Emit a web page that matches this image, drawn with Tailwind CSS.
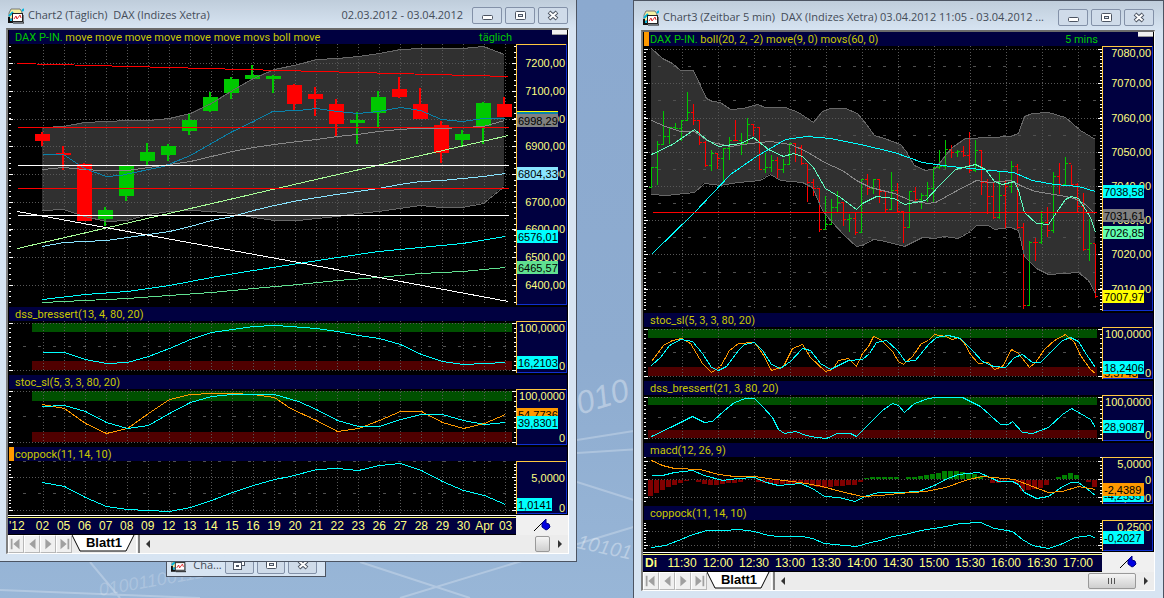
<!DOCTYPE html>
<html lang="de">
<head>
  <meta charset="utf-8">
  <meta name="viewport" content="width=device-width, initial-scale=1">
  <title>DAX Charts</title>
  <script src="https://cdn.jsdelivr.net/npm/@tailwindcss/browser@4"></script>
</head>
<body class="bg-[#93b1d3] font-['Liberation_Sans',Arial,sans-serif]">
<svg class="hidden">
  <symbol id="app" viewBox="0 0 16 16">
    <path d="M3 1h9l2 3-2 7H1V5z" fill="#f4f0a0" stroke="#777" />
    <path d="M1 8l4-4M0 13l5-2M14 3l2-2" stroke="#00b4dc" stroke-width="2" />
    <path d="M1 9v5h4" fill="none" stroke="#111" stroke-width="2" />
    <rect x="4.500" y="5.500" width="10" height="8" fill="#fff" stroke="#222" />
    <path d="M6 11l2-3 1 3 3-4 1 3" fill="none" stroke="#e03030" />
    <path d="M5 15h11V7" fill="none" stroke="#111" />
  </symbol>
  <symbol id="min" viewBox="0 0 14 12"><rect x="2.500" y="5.500" width="10" height="4" rx="1" fill="#fff" stroke="#4c5462" /></symbol>
  <symbol id="max" viewBox="0 0 14 12"><rect x="2.500" y="1.500" width="10" height="8" rx="1" fill="#fff" stroke="#4c5462" /><rect x="5.500" y="4.500" width="4" height="2" fill="#dfe6ee" stroke="#4c5462" /></symbol>
  <symbol id="restore" viewBox="0 0 14 12"><rect x="5.500" y="0.500" width="7" height="6" fill="#fff" stroke="#4c5462" /><rect x="1.500" y="3.500" width="8" height="7" fill="#fff" stroke="#4c5462" /><rect x="4.500" y="6.500" width="2" height="1" fill="#fff" stroke="#4c5462" /></symbol>
  <symbol id="close" viewBox="0 0 14 12"><path d="M3 2l8 7M11 2l-8 7" stroke="#4c5462" stroke-width="4" /><path d="M3.500 2.500l7 6M10.500 2.500l-7 6" stroke="#fff" stroke-width="2" /></symbol>
  <symbol id="first" viewBox="0 0 16 16"><path d="M3 2v12" stroke="#a0a0a0" stroke-width="2" /><path d="M12 2v12L5 8z" fill="#a0a0a0" /></symbol>
  <symbol id="prev" viewBox="0 0 16 16"><path d="M12 2v12L5 8z" fill="#a0a0a0" /></symbol>
  <symbol id="next" viewBox="0 0 16 16"><path d="M5 2v12l7-6z" fill="#a0a0a0" /></symbol>
  <symbol id="last" viewBox="0 0 16 16"><path d="M4 2v12l7-6z" fill="#a0a0a0" /><path d="M13 2v12" stroke="#a0a0a0" stroke-width="2" /></symbol>
  <symbol id="flag" viewBox="0 0 18 14"><path d="M1 13L13 1" stroke="#000" /><path d="M9 5l4-4v4l3 1 1 3-2 2-2 1-4-3z" fill="#0000e0" stroke="#000080" /></symbol>
</svg>

<main class="relative flex min-h-screen items-start gap-14 overflow-hidden">
  <!-- desktop wallpaper -->
  <svg class="absolute inset-0 h-full w-full" viewBox="0 0 1164 598" preserveAspectRatio="xMidYMid slice" aria-hidden="true">
    <defs>
      <linearGradient id="sky" x1="0" y1="0" x2="0" y2="1">
        <stop offset="0" stop-color="#8ba9cf" /><stop offset="0.6" stop-color="#8eacd0" /><stop offset="1" stop-color="#98b6d7" />
      </linearGradient>
    </defs>
    <rect width="1164" height="598" fill="url(#sky)" />
    <g stroke="#fff" stroke-opacity="0.25" stroke-width="2">
      <path d="M577 440L640 430M577 453L640 449M577 482L640 502M360 562L470 598M400 598L640 525M90 562L120 598M0 590L200 598" fill="none" />
    </g>
    <g fill="#fff" fill-opacity="0.35" font-style="italic">
      <text x="563" y="420" font-size="32" transform="rotate(-17 563 420)">0010</text>
      <text x="576" y="548" font-size="20" transform="rotate(12 576 548)">10101</text>
      <text x="100" y="596" font-size="18" fill-opacity="0.2" transform="rotate(-10 100 596)">01001100111</text>
    </g>
  </svg>

  <!-- minimized window, half hidden below the first chart -->
  <section class="absolute top-[549px] left-[166px] flex h-7 w-40 items-center gap-[3px] border border-[#4c5462] bg-[#d7e4f2] px-1 pt-1">
    <svg class="size-4"><use href="#app" /></svg>
    <h2 class="flex-1 pl-1 font-['Open_Sans',sans-serif] text-[11px] text-[#444c58]">Cha...</h2>
    <button aria-label="Wiederherstellen" class="flex h-[17px] w-[30px] items-center justify-center rounded-xs border border-[#8391a8] bg-[#cfdbe9]"><svg class="h-3 w-3.5"><use href="#restore" /></svg></button>
    <button aria-label="Maximieren" class="flex h-[17px] w-[30px] items-center justify-center rounded-xs border border-[#8391a8] bg-[#cfdbe9]"><svg class="h-3 w-3.5"><use href="#max" /></svg></button>
    <button aria-label="Schließen" class="mr-1 flex h-[17px] w-[30px] items-center justify-center rounded-xs border border-[#8391a8] bg-[#cfdbe9]"><svg class="h-3 w-3.5"><use href="#close" /></svg></button>
  </section>

  <!-- Chart2 -->
  <section class="relative min-w-0 flex-[563] border-r border-b border-[#4c5462] bg-[#d7e4f2] bg-linear-to-b from-[#bfcddb] to-[#d7e4f2] to-5% pr-[7px] pb-[7px] pl-1.5">
    <header class="flex h-7 items-center gap-[3px] pt-[3px] font-['Open_Sans',sans-serif] text-[11px] text-[#444c58]">
      <svg class="ml-[2px] size-4"><use href="#app" /></svg>
      <h1 class="ml-px flex-1 truncate whitespace-pre">Chart2 (Täglich)  DAX (Indizes Xetra)</h1>
      <span class="mr-1.5 whitespace-nowrap">02.03.2012 - 03.04.2012</span>
      <button aria-label="Minimieren" class="flex h-[17px] w-[30px] items-center justify-center rounded-xs border border-[#8391a8] bg-[#cfdbe9]"><svg class="h-3 w-3.5"><use href="#min" /></svg></button>
      <button aria-label="Maximieren" class="flex h-[17px] w-[30px] items-center justify-center rounded-xs border border-[#8391a8] bg-[#cfdbe9]"><svg class="h-3 w-3.5"><use href="#max" /></svg></button>
      <button aria-label="Schließen" class="mr-px flex h-[17px] w-[30px] items-center justify-center rounded-xs border border-[#8391a8] bg-[#cfdbe9]"><svg class="h-3 w-3.5"><use href="#close" /></svg></button>
    </header>
    <div class="border-t-2 border-r border-b border-l-2 border-t-[#6a6a6a] border-r-white border-b-white border-l-[#808080] bg-black text-[11px] leading-4 text-[#c8c800]">
      <div class="mx-px flex h-3.5 bg-[#000040] pl-1.5 font-['Roboto',sans-serif]">
        <p class="flex-1 whitespace-nowrap"><span class="text-[#00c800]">DAX P-IN.</span> move move move move move move movs boll move</p>
        <span class="mr-10 text-[#00c800]">täglich</span>
        <i class="h-[5px] w-[15px] self-start border-b border-[#999] bg-[#f0f0f0]"></i>
      </div>
      <div class="flex h-[263px]" data-panel="a1"></div>
      <h2 class="mx-px h-3.5 bg-[#000040] pl-1.5 font-['Roboto',sans-serif]">dss_bressert(13, 4, 80, 20)</h2>
      <div class="flex h-[54px]" data-panel="a2"></div>
      <h2 class="mx-px h-3.5 bg-[#000040] pl-1.5 font-['Roboto',sans-serif]">stoc_sl(5, 3, 3, 80, 20)</h2>
      <div class="flex h-[58px]" data-panel="a3"></div>
      <h2 class="mx-px h-3.5 border-l-[5px] border-[#ff9900] bg-[#000040] pl-px font-['Roboto',sans-serif]">coppock(11, 14, 10)</h2>
      <div class="flex h-[54px]" data-panel="a4"></div>
      <div class="flex h-5 bg-[#f0f0f0]">
        <div class="flex-1 border-t border-b border-t-white border-b-black bg-black pt-px">
          <ol class="flex h-[17px] border-t border-[#ffff80] bg-[#000040] text-center text-xs leading-4 text-[#ffff80]" data-ticks="'12 02 05 06 07 08 09 12 13 14 15 16 19 20 21 22 23 26 27 28 29 30 Apr 03"></ol>
        </div>
        <div class="flex w-[52px] items-center justify-center"><svg class="h-3.5 w-[18px]"><use href="#flag" /></svg></div>
      </div>
      <nav class="flex h-[18px] bg-[#ececec]">
        <button aria-label="Erstes Blatt" class="w-4 border border-[#b8b8b8] border-t-white border-l-white bg-[#f0f0f0]"><svg class="h-4 w-full"><use href="#first" /></svg></button>
        <button aria-label="Vorheriges Blatt" class="w-4 border border-[#b8b8b8] border-t-white border-l-white bg-[#f0f0f0]"><svg class="h-4 w-full"><use href="#prev" /></svg></button>
        <button aria-label="Nächstes Blatt" class="w-4 border border-[#b8b8b8] border-t-white border-l-white bg-[#f0f0f0]"><svg class="h-4 w-full"><use href="#next" /></svg></button>
        <button aria-label="Letztes Blatt" class="w-4 border border-[#b8b8b8] border-t-white border-l-white bg-[#f0f0f0]"><svg class="h-4 w-full"><use href="#last" /></svg></button>
        <a href="#" class="relative w-16 text-center text-[13px] leading-4 font-bold text-black">
          <svg class="absolute inset-0 h-full w-full" viewBox="0 0 64 18"><path d="M0 0l8 16h46L62 0" fill="#fff" stroke="#000" /></svg>
          <span class="relative">Blatt1</span>
        </a>
        <i class="w-1 border-r-2 border-l border-[#808080] border-l-white bg-[#f0f0f0]"></i>
        <button aria-label="Nach links" class="w-4 pl-1"><svg class="h-4 w-2" viewBox="0 0 8 16"><path d="M6 4v8L2 8z" fill="#333" /></svg></button>
        <div class="flex flex-1 justify-end"><span class="my-px w-[15px] rounded-xs border border-[#999] bg-linear-to-b from-[#f4f4f4] to-[#cfcfcf]"></span></div>
        <button aria-label="Nach rechts" class="w-[18px] pl-[6px]"><svg class="h-4 w-2" viewBox="0 0 8 16"><path d="M2 4v8l4-4z" fill="#333" /></svg></button>
      </nav>
    </div>
  </section>

  <!-- Chart3 -->
  <section class="relative min-h-screen min-w-0 flex-[514] border-x border-t border-[#4c5462] bg-[#d7e4f2] bg-linear-to-b from-[#bfcddb] to-[#d7e4f2] to-5% pr-2 pl-[7px]">
    <header class="flex h-[29px] items-center gap-[3px] pt-1 font-['Open_Sans',sans-serif] text-[11px] text-[#444c58]">
      <svg class="ml-[2px] size-4"><use href="#app" /></svg>
      <h1 class="ml-px flex-1 truncate whitespace-pre">Chart3 (Zeitbar 5 min)  DAX (Indizes Xetra) 03.04.2012 11:05 - 03.04.2012 ...</h1>
      <button aria-label="Minimieren" class="flex h-[17px] w-[30px] shrink-0 items-center justify-center rounded-xs border border-[#8391a8] bg-[#cfdbe9]"><svg class="h-3 w-3.5"><use href="#min" /></svg></button>
      <button aria-label="Maximieren" class="flex h-[17px] w-[30px] shrink-0 items-center justify-center rounded-xs border border-[#8391a8] bg-[#cfdbe9]"><svg class="h-3 w-3.5"><use href="#max" /></svg></button>
      <button aria-label="Schließen" class="mr-px flex h-[17px] w-[30px] shrink-0 items-center justify-center rounded-xs border border-[#8391a8] bg-[#cfdbe9]"><svg class="h-3 w-3.5"><use href="#close" /></svg></button>
    </header>
    <div class="border-t-2 border-r border-b border-l-2 border-t-[#6a6a6a] border-r-white border-b-white border-l-[#808080] bg-black text-[11px] leading-4 text-[#c8c800]">
      <div class="mx-px flex h-3.5 border-l-[5px] border-[#ff9900] bg-[#000040] pl-px font-['Roboto',sans-serif]">
        <p class="flex-1 whitespace-nowrap"><span class="text-[#00c800]">DAX P-IN.</span> boll(20, 2, -2) move(9, 0) movs(60, 0)</p>
        <span class="mr-10 text-[#00c800]">5 mins</span>
        <i class="h-[5px] w-[15px] self-start border-b border-[#999] bg-[#f0f0f0]"></i>
      </div>
      <div class="flex h-[267px]" data-panel="b1"></div>
      <h2 class="mx-px h-3.5 bg-[#000040] pl-1.5 font-['Roboto',sans-serif]">stoc_sl(5, 3, 3, 80, 20)</h2>
      <div class="flex h-[54px]" data-panel="b2"></div>
      <h2 class="mx-px h-3.5 bg-[#000040] pl-1.5 font-['Roboto',sans-serif]">dss_bressert(21, 3, 80, 20)</h2>
      <div class="flex h-12" data-panel="b3"></div>
      <h2 class="mx-px h-3.5 bg-[#000040] pl-1.5 font-['Roboto',sans-serif]">macd(12, 26, 9)</h2>
      <div class="flex h-[49px]" data-panel="b4"></div>
      <h2 class="mx-px h-3.5 bg-[#000040] pl-1.5 font-['Roboto',sans-serif]">coppock(11, 14, 10)</h2>
      <div class="flex h-8" data-panel="b5"></div>
      <div class="flex h-5 bg-[#f0f0f0]">
        <div class="flex-1 border-t border-b border-t-white border-b-black bg-black pt-px">
          <ol class="flex h-[17px] border-t border-[#ffff80] bg-[#000040] pr-1.5 text-center text-xs leading-4 text-[#ffff80]" data-ticks="Di 11:30 12:00 12:30 13:00 13:30 14:00 14:30 15:00 15:30 16:00 16:30 17:00"></ol>
        </div>
        <div class="flex w-[52px] items-center justify-center"><svg class="h-3.5 w-[18px]"><use href="#flag" /></svg></div>
      </div>
      <nav class="flex h-[18px] bg-[#ececec]">
        <button aria-label="Erstes Blatt" class="w-4 border border-[#b8b8b8] border-t-white border-l-white bg-[#f0f0f0]"><svg class="h-4 w-full"><use href="#first" /></svg></button>
        <button aria-label="Vorheriges Blatt" class="w-4 border border-[#b8b8b8] border-t-white border-l-white bg-[#f0f0f0]"><svg class="h-4 w-full"><use href="#prev" /></svg></button>
        <button aria-label="Nächstes Blatt" class="w-4 border border-[#b8b8b8] border-t-white border-l-white bg-[#f0f0f0]"><svg class="h-4 w-full"><use href="#next" /></svg></button>
        <button aria-label="Letztes Blatt" class="w-4 border border-[#b8b8b8] border-t-white border-l-white bg-[#f0f0f0]"><svg class="h-4 w-full"><use href="#last" /></svg></button>
        <a href="#" class="relative w-16 text-center text-[13px] leading-4 font-bold text-black">
          <svg class="absolute inset-0 h-full w-full" viewBox="0 0 64 18"><path d="M0 0l8 16h46L62 0" fill="#fff" stroke="#000" /></svg>
          <span class="relative">Blatt1</span>
        </a>
        <i class="w-1 border-r-2 border-l border-[#808080] border-l-white bg-[#f0f0f0]"></i>
        <button aria-label="Nach links" class="w-4 pl-1"><svg class="h-4 w-2" viewBox="0 0 8 16"><path d="M6 4v8L2 8z" fill="#333" /></svg></button>
        <div class="flex flex-1 justify-end"><span class="my-px w-12 rounded-xs border border-[#999] bg-linear-to-b from-[#f4f4f4] to-[#cfcfcf]"><svg class="mx-auto h-3.5 w-3" viewBox="0 0 12 14"><path d="M2.500 4v6M5.500 4v6M8.500 4v6" stroke="#555" /></svg></span></div>
        <button aria-label="Nach rechts" class="w-[18px] pl-[6px]"><svg class="h-4 w-2" viewBox="0 0 8 16"><path d="M2 4v8l4-4z" fill="#333" /></svg></button>
      </nav>
    </div>
  </section>
</main>

<script>
  const UP = '#00c800', DOWN = '#ff0000', CYAN = '#00ffff', ORANGE = '#ff9900';

  // x0/x1: plot edges, y0: top of the panel, h: height, box: bottom of the price scale
  const left = { x0: 8, x1: 516, vx: 43, step: 21, b0: 32, b1: 512 };
  const right = { x0: 643, x1: 1102, vx: 682, step: 36, b0: 648, b1: 1097 };

  // wick top, body top, body bottom, wick bottom, rising
  const candles = [
    [132,134,141,146,0],[146,153,155,170,0],[163,164,221,221,0],[207,210,219,226,1],[165,166,196,201,1],
    [143,152,161,165,1],[144,146,155,161,1],[114,120,131,135,1],[92,97,111,112,1],[77,79,93,99,1],
    [65,75,79,80,1],[75,76,79,93,1],[84,85,104,110,0],[87,94,99,116,0],[99,104,124,136,0],[112,120,123,144,1],
    [91,97,113,127,1],[77,89,97,98,0],[88,104,119,119,0],[121,125,153,163,0],[130,134,140,146,1],
    [102,103,126,144,1],[97,104,117,117,0]
  ];

  // high, low, close, rising
  const bars = [
    [167,187,167,1],[141,184,144,1],[111,144,136,1],[127,143,127,1],[123,128,128,1],[120,140,120,1],[92,120,112,1],
    [104,124,120,0],[120,144,142,0],[141,166,165,0],[150,170,153,1],[153,168,158,0],[148,181,148,1],[137,159,140,1],
    [120,140,140,0],[133,154,143,1],[118,143,124,1],[124,135,127,0],[127,169,169,0],[153,172,167,1],[155,171,160,1],
    [157,178,169,0],[159,172,164,1],[143,164,143,1],[143,161,147,0],[145,164,163,0],[164,201,182,0],[179,195,188,0],
    [188,231,229,0],[196,229,224,1],[199,224,207,1],[191,212,202,1],[202,225,219,0],[214,231,218,1],[213,234,232,0],
    [179,232,179,1],[174,194,188,0],[179,193,179,1],[179,202,191,0],[191,211,209,0],[172,209,190,1],[183,212,211,0],
    [211,242,227,0],[191,227,191,1],[187,200,199,0],[193,208,195,1],[182,201,188,1],[167,202,167,1],[150,168,166,1],
    [140,168,149,1],[145,157,152,0],[150,156,151,1],[146,156,155,0],[132,172,170,0],[140,171,150,1],[150,194,182,0],
    [179,213,196,0],[183,218,217,0],[172,218,195,1],[180,228,186,0],[161,192,166,1],[164,228,227,0],[223,308,305,0],
    [241,305,242,1],[238,260,242,0],[211,243,222,1],[207,236,230,0],[172,232,176,1],[163,193,184,0],[157,184,163,1],
    [165,184,184,0],[183,212,206,0],[193,250,249,0],[219,260,243,1],[244,297,296,0]
  ];

  const histogram = [
    -16,-13,-10,-7,-5,-3,-1,0,-2,-4,-5,-5,-4,-3,-3,-2,0,0,-2,-3,-3,-4,-4,-4,-4,-4,-4,-6,-7,-8,-7,-6,-6,-5,-5,-2,
    1,2,2,2,2,2,0,2,2,3,4,5,6,8,8,8,7,6,5,3,0,-3,-3,-1,0,-4,-11,-10,-9,-8,-5,0,2,4,6,4,0,-2,-7
  ];

  const panels = {
    a1: {
      ...left, y0: 44, h: 263, box: 305, grid: [63,91,119,146,174,202,229,257,285], minor: 5.55,
      band: ['42,127 63,126 84,122 106,121 127,120 148,120 169,118 190,113 211,103 232,90 253,78 274,69 298,64 316,59 337,58 358,56 379,53 400,49 421,48 462,48 483,46 504,54',
             '42,210 63,209 84,216 106,221 127,220 148,214 169,211 190,210 211,211 232,213 253,217 274,220 298,220 316,218 337,216 357,213 378,211 399,208 420,205 441,207 462,207 483,203 504,186'],
      candles,
      lines: [
        ['#888888', '42,169 63,167 84,169 100,170 127,170 148,167 169,164 190,161 211,156 232,151 253,147 274,144 298,141 316,139 337,136 357,134 378,131 399,129 415,128 441,128 462,127 483,126 504,120'],
        ['#0a82aa', '42,154 63,154 72,160 84,168 106,176 120,175 148,169 163,166 190,155 211,143 232,131 253,121 272,111 298,110 316,108 337,111 357,113 378,111 400,107 420,110 441,119 462,121 483,118 504,118'],
        [CYAN, '42,299 85,294 127,291 169,285 211,277 253,270 298,263 337,257 378,251 420,247 462,243 505,236'],
        ['#60e090', '42,302 127,298 211,292 253,288 298,284 337,280 378,277 420,273 462,271 505,267'],
        ['#88e4ff', '42,246 63,242 84,241 106,240 127,237 148,234 169,231 190,226 211,220 232,216 253,210 274,205 298,200 336,194 378,188 399,184 420,181 441,180 462,178 483,176 505,173'],
        ['#a8ff98', '17,248 298,183 508,135'],
        ['#ffffff', '17,211 298,262 508,301'],
        [DOWN, '17,63 508,76'], [DOWN, '17,127 508,127'], [DOWN, '17,188 508,188'],
        ['#ffffff', '17,165 508,165'], ['#ffffff', '17,215 508,215']
      ],
      labels: [['7200,00',63],['7100,00',91],['7000,00',119],['6900,00',146],['6800,00',174],['6700,00',202],['6600,00',229],['6500,00',257],['6400,00',285]],
      badges: [['','#ffff00',111,1],['','#0a82aa',112,2],['6998,29','#808080',114,13],['6804,33','#88e4ff',167,13],['6576,01',CYAN,230,13],['6465,57','#60e090',261,13]]
    },
    a2: {
      ...left, y0: 321, h: 54, box: 373, grid: [323,370], dash: [346], minor: 4.7, zones: [323,361,9],
      lines: [[CYAN, '42,352 64,352 85,359 106,363 127,362 148,356 169,348 190,339 211,332 232,329 253,326 274,325 290,326 316,328 337,331 358,335 379,338 400,344 421,354 442,361 463,364 484,363 505,362']],
      labels: [['100,0000',328],['0',366]], badges: [['16,2103',CYAN,356,13]]
    },
    a3: {
      ...left, y0: 389, h: 58, box: 445, grid: [391,442], dash: [416], minor: 5.1, zones: [391,432,10],
      lines: [
        [ORANGE, '42,404 64,408 85,423 106,433 127,428 148,413 169,399 190,394 211,393 232,393 253,394 274,397 290,408 316,420 337,431 358,428 379,420 400,411 421,411 442,422 463,428 484,423 505,414'],
        [CYAN, '42,406 64,405 85,411 106,422 127,428 148,425 169,413 190,402 211,396 232,394 274,394 298,401 316,409 337,420 358,426 379,426 400,419 421,414 442,414 463,420 484,424 505,422']
      ],
      labels: [['100,0000',396],['0',438]], badges: [['54,7736',ORANGE,408,13],['39,8301',CYAN,416,13]]
    },
    a4: {
      ...left, y0: 461, h: 54, box: 514, grid: [477,510], dash: [461,493], minor: 3.3,
      lines: [[CYAN, '42,482 64,486 85,497 106,506 127,509 148,510 169,511 190,507 211,500 232,492 253,485 274,479 290,476 316,469 337,468 358,470 379,465 400,463 421,470 442,481 463,490 484,495 505,504']],
      labels: [['5,0000',478],['0',508]], badges: [['1,0141',CYAN,498,13]]
    },
    b1: {
      ...right, y0: 46, h: 267, box: 311, grid: [49,83,118,152,186,220,254,289], dash: [66,100,135,169,203,237,272,306], minor: 3.42,
      band: ['651,48 662,58 672,63 680,70 693,70 706,98 712,101 720,102 730,109 743,108 757,104 765,107 785,107 798,112 813,122 822,111 830,108 845,108 857,113 866,124 874,135 884,138 900,144 905,150 914,165 925,170 935,168 945,155 952,147 965,138 990,137 1010,136 1018,133 1024,116 1032,113 1048,112 1065,117 1080,130 1095,139',
             '651,194 666,195 694,192 704,183 720,185 738,182 760,180 770,174 780,180 802,182 812,187 822,210 832,222 844,235 856,246 862,245 873,239 885,241 904,246 912,242 922,237 934,238 944,236 958,238 970,231 976,225 988,225 994,229 1010,227 1018,230 1024,256 1036,268 1048,274 1078,272 1088,280 1095,293'],
      bars,
      lines: [
        ['#888888', '651,120 665,126 680,131 694,131 708,141 730,146 750,143 770,141 790,144 806,151 824,162 842,170 856,180 870,187 894,193 910,200 927,203 935,202 955,191 976,180 990,182 1010,180 1022,186 1035,191 1060,195 1074,198 1085,204 1095,214'],
        [CYAN, '651,254 694,212 730,174 756,156 768,149 785,139 806,136 830,138 860,144 894,152 922,162 950,166 980,169 1013,172 1032,180 1054,184 1078,186 1095,191'],
        ['#60ffc0', '651,154 672,144 694,129 706,139 718,146 740,143 753,137 768,149 783,156 793,153 802,156 813,167 825,188 840,197 856,209 862,203 876,196 894,198 904,204 925,200 940,184 955,169 975,164 985,169 994,181 1002,184 1014,181 1018,190 1024,212 1036,223 1048,224 1056,212 1065,199 1071,196 1078,198 1085,209 1090,217 1095,232'],
        [DOWN, '652,212 1096,212']
      ],
      labels: [['7080,00',53],['7070,00',83],['7060,00',118],['7050,00',152],['7040,00',186],['7030,00',220],['7020,00',254],['7010,00',289]],
      badges: [['7038,58',CYAN,185,13],['7031,61','#808080',209,13],['7026,85','#60ffb0',226,13],['7007,97','#ffff00',290,13]]
    },
    b2: {
      ...right, y0: 327, h: 54, box: 379, grid: [329,376], dash: [352], minor: 4.7, zones: [329,367,9],
      lines: [
        [ORANGE, '651,361 663,345 672,340 681,338 690,343 702,363 711,372 720,366 729,350 738,343 754,342 762,353 771,370 783,366 792,348 802,344 810,357 825,371 832,369 838,360 848,358 856,366 862,353 868,346 873,336 880,339 892,351 898,361 903,364 912,356 921,343 928,340 934,334 945,336 952,339 958,337 964,343 970,354 978,363 988,362 994,369 1002,366 1011,349 1018,353 1029,367 1035,362 1044,349 1054,340 1065,334 1074,342 1080,355 1090,369 1095,373'],
        [CYAN, '651,365 660,357 669,345 680,339 692,341 702,353 711,367 718,370 726,366 738,350 744,344 754,342 762,350 771,364 780,368 790,361 802,348 810,350 820,363 830,369 838,365 848,360 862,359 869,353 876,342 886,340 897,350 905,361 915,360 928,344 936,337 948,335 960,338 972,350 982,361 993,366 1005,367 1014,357 1022,354 1032,362 1040,362 1050,352 1062,340 1070,337 1078,341 1086,354 1095,367']
      ],
      labels: [['100,0000',334],['0',373]], badges: [['5,5743',ORANGE,366,12],['18,2406',CYAN,361,13]]
    },
    b3: {
      ...right, y0: 395, h: 48, box: 441, grid: [397,438], dash: [417], minor: 4.1, zones: [397,430,8],
      lines: [[CYAN, '651,436 672,426 692,416 704,422 712,421 724,410 734,402 745,398 754,398 762,406 772,417 778,429 784,433 795,431 806,435 816,437 826,438 837,433 850,433 856,436 862,430 876,416 882,410 892,403 898,405 904,412 914,403 928,398 936,397 962,397 970,401 980,406 990,415 1000,424 1008,424 1012,421 1022,432 1032,433 1048,427 1062,414 1071,408 1080,413 1090,419 1095,427']],
      labels: [['100,0000',402],['0',435]], badges: [['28,9087',CYAN,420,13]]
    },
    b4: {
      ...right, y0: 457, h: 49, box: 504, grid: [461,479,497], minor: 3.6, histogram,
      lines: [
        [CYAN, '651,475 662,475 674,472 692,470 704,475 722,480 738,478 754,477 766,482 778,485 800,483 812,488 824,496 838,497 855,501 864,496 878,492 900,492 918,491 934,485 945,479 958,474 978,472 990,477 998,481 1012,481 1018,484 1024,492 1036,498 1048,496 1062,486 1071,482 1078,482 1086,488 1095,495'],
        [ORANGE, '651,460 662,465 674,468 700,469 718,474 734,476 754,476 775,479 800,482 822,486 840,491 862,496 880,495 898,493 925,491 945,487 968,479 982,476 1004,478 1014,479 1032,486 1048,492 1062,491 1078,486 1095,489']
      ],
      labels: [['5,0000',464],['0',480],['-5,0000',498]], badges: [['-4,2535',CYAN,489,13],['-2,4389',ORANGE,483,13]]
    },
    b5: {
      ...right, y0: 520, h: 32, box: 551, grid: [531,545], minor: 2.8,
      lines: [[CYAN, '651,547 665,545 678,540 690,535 706,530 724,530 738,529 754,531 768,535 778,536 802,536 812,538 824,543 844,545 856,546 870,542 880,540 892,536 905,534 920,530 940,527 960,523 980,522 994,528 1012,531 1022,539 1032,545 1048,548 1060,544 1075,537 1090,535 1095,538']],
      labels: [['0,2500',527]], badges: [['-0,2027',CYAN,531,13]]
    }
  };

  const rect = (x, y, w, h, fill) => `<rect x="${x}" y="${y}" width="${w}" height="${h}" fill="${fill}"/>`;

  function plot(p) {
    let s = '';
    const bottom = p.box - 1;
    if (p.band) {
      const lower = p.band[1].split(' ').reverse().join(' ');
      s += `<polygon points="${p.band[0]} ${lower}" fill="#303030"/>`;
    }
    if (p.zones) {
      s += rect(p.b0, p.zones[0], p.b1 - p.b0, p.zones[2], '#005000');
      s += rect(p.b0, p.zones[1], p.b1 - p.b0, p.zones[2], '#500000');
    }
    for (let x = p.vx; x < p.x1 - 5; x += p.step) {
      s += `<path d="M${x + .5} ${p.y0}V${bottom}" stroke="#585858" stroke-dasharray="1 2"/>`;
    }
    p.grid.forEach(y => {
      s += `<path d="M${p.x0 + 6} ${y + .5}H${p.x1 - 4}" stroke="#585858" stroke-dasharray="1 2"/>`;
    });
    (p.dash || []).forEach(y => {
      s += `<path d="M${p.x0 + 15} ${y + .5}H${p.x1 - 6}" stroke="#505050" stroke-dasharray="3 12"/>`;
    });
    // scale ticks on both sides
    const major = p.grid[0];
    for (let y = major - Math.floor((major - p.y0) / p.minor) * p.minor; y < bottom; y += p.minor) {
      s += rect(p.x0 + 1, Math.round(y), 2, 1, '#fff') + rect(p.x1 - 2, Math.round(y), 2, 1, '#fff');
    }
    p.grid.forEach(y => {
      s += rect(p.x0 + 1, y, 4, 1, '#fff') + rect(p.x1 - 4, y, 4, 1, '#fff');
    });
    (p.histogram || []).forEach((v, i) => {
      if (v) s += rect(648 + 6 * i, v > 0 ? 479 - v : 480, 5, Math.abs(v), v > 0 ? '#008000' : '#800000');
    });
    (p.candles || []).forEach(([hi, top, low, lo, up], i) => {
      const x = 42 + 21 * i, c = up ? UP : DOWN;
      s += rect(x - 1, hi, 2, lo - hi, c) + rect(x - 7, top, 15, low - top, c);
    });
    (p.bars || []).forEach(([hi, lo, close, up], i, all) => {
      const x = 651 + 6 * i, c = up ? UP : DOWN, open = i ? all[i - 1][2] : lo;
      s += rect(x, hi, 1, lo - hi + 1, c) + rect(x - 2, open, 2, 1, c) + rect(x + 1, close, 2, 1, c);
    });
    const lines = (p.band || []).map(b => ['#686868', b]).concat(p.lines);
    lines.forEach(([c, pts]) => {
      s += `<polyline points="${pts}" transform="translate(.5 .5)" fill="none" stroke="${c}"/>`;
    });
    return `<svg class="h-full min-w-0 flex-1" viewBox="${p.x0} ${p.y0} ${p.x1 - p.x0} ${p.h}" preserveAspectRatio="none" shape-rendering="crispEdges">${s}</svg>`;
  }

  function scale(p) {
    const h = p.box - p.y0;
    let s = rect(0, 0, 51, h, '#000040');
    p.labels.forEach(([t, y]) => {
      s += `<text x="49" y="${y - p.y0 + 4}" text-anchor="end" fill="#ffff80">${t}</text>`;
    });
    p.badges.forEach(([t, c, y, bh]) => {
      s += rect(1, y - p.y0, t.length === 6 ? 35 : 41, bh, c);
      if (t) s += `<text x="2" y="${y - p.y0 + 11}" fill="#000">${t}</text>`;
    });
    s += `<path d="M50.500 0V${h - .5}H0" fill="none" stroke="#1030d0"/><path d="M.5 ${h}V.5H50" fill="none" stroke="#ffc840"/>`;
    return `<svg class="w-[52px] text-[11px]" style="height:${h}px" shape-rendering="crispEdges">${s}</svg>`;
  }

  document.querySelectorAll('[data-panel]').forEach(el => {
    const p = panels[el.dataset.panel];
    el.innerHTML = plot(p) + scale(p);
  });

  document.querySelectorAll('[data-ticks]').forEach(el => {
    el.innerHTML = el.dataset.ticks.split(' ').map((t, i) => {
      if (i) return `<li class="flex min-w-0 flex-1 justify-center">${t}</li>`;
      return t === 'Di' ? `<li class="w-[21px] pl-[2px] text-left font-bold">${t}</li>` : `<li class="w-6 pl-px text-left">${t}</li>`;
    }).join('');
  });
</script>
</body>
</html>
